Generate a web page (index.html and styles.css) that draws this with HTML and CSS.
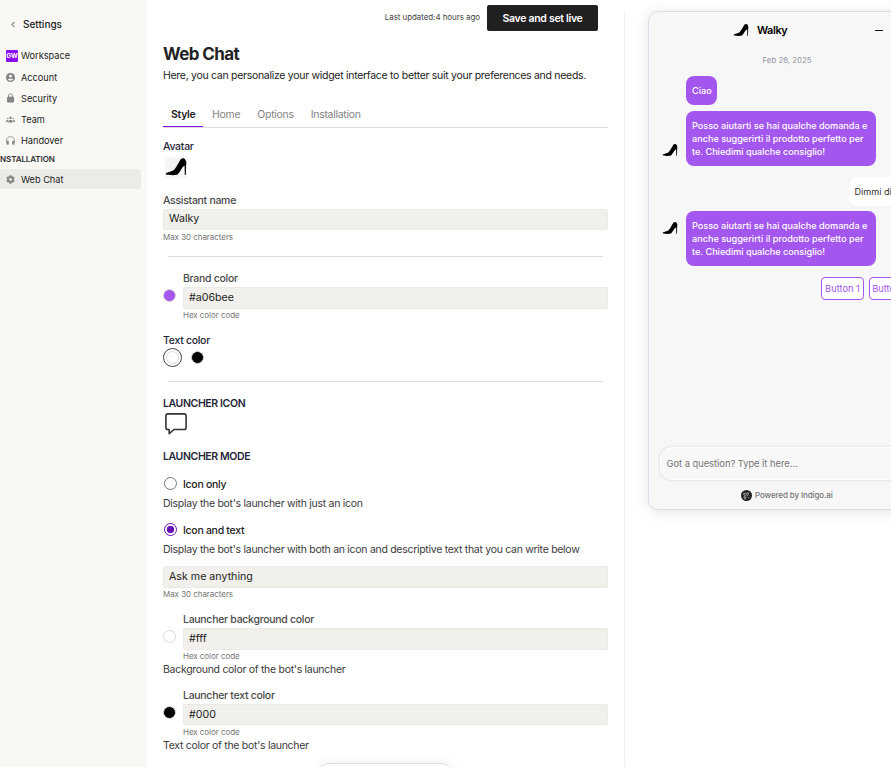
FILE: index.html
```html
<!DOCTYPE html>
<html lang="en">
<head>
<meta charset="utf-8">
<title>Web Chat settings</title>
<link rel="stylesheet" href="styles.css">
</head>
<body>
<svg class="defs" width="0" height="0">
  <symbol id="shoe" viewBox="0 0 22 21">
    <path d="M0.8 16.2C3.2 14.8 6.6 14.6 8.6 13.2C11.6 10.8 13.4 5 16 2C17 .9 19.3 1 20 2.2C21.6 4.4 21.6 6.6 21 8.6L20.8 17.9H19.8L19.6 8.8C18.2 9.4 17.4 10.6 16.2 12.4C14.6 15 13.2 17.4 11.4 18C8 18.3 3.2 18.1 1 17.5Z"/>
  </symbol>
</svg>
<div class="app">
  <aside class="sidebar">
    <div class="back"><svg width="4" height="7" viewBox="0 0 4 7"><path d="M3.2 1L1 3.5L3.2 6" fill="none" stroke="#333" stroke-width="0.9"/></svg><span>Settings</span></div>
    <nav class="nav">
      <a class="item"><i class="badge">GW</i>Workspace</a>
      <a class="item"><svg width="9" height="9" viewBox="0 0 18 18"><circle cx="9" cy="9" r="9" fill="#858585"/><circle cx="9" cy="6.4" r="2.8" fill="#f9f8f4"/><path d="M3.6 13.2C5 10.6 13 10.6 14.4 13.2C12.5 16.2 5.5 16.2 3.6 13.2Z" fill="#f9f8f4"/></svg>Account</a>
      <a class="item"><svg width="9" height="10" viewBox="0 0 18 20"><path d="M5 9V5.5C5 0.5 13 0.5 13 5.5V9" fill="none" stroke="#858585" stroke-width="2"/><rect x="2" y="7.5" width="14" height="11.5" rx="2.5" fill="#858585"/><circle cx="9" cy="13" r="1.2" fill="#aaa"/></svg>Security</a>
      <a class="item"><svg width="9" height="7" viewBox="0 0 18 14"><g fill="#858585"><circle cx="9" cy="3.4" r="2.4"/><circle cx="3.6" cy="5" r="1.6"/><circle cx="14.4" cy="5" r="1.6"/><path d="M4.6 13V10.2C5.4 7 12.6 7 13.4 10.2V13ZM0 12V9.6C.5 8 2.5 7.6 4.2 8.2L3.2 12ZM18 12V9.6C17.5 8 15.5 7.6 13.8 8.2L14.8 12Z"/></g></svg>Team</a>
      <a class="item"><svg width="9" height="9" viewBox="0 0 18 18"><path d="M1.2 13V8.5C1.5-1.2 16.5-1.2 16.8 8.5V13" fill="none" stroke="#858585" stroke-width="1.6"/><rect x="1" y="9.5" width="4.6" height="8" rx="1.4" fill="#858585"/><rect x="12.4" y="9.5" width="4.6" height="8" rx="1.4" fill="#858585"/></svg>Handover</a>
    </nav>
    <div class="group">NSTALLATION</div>
    <a class="item active"><svg width="9" height="9" viewBox="0 0 18 18"><g fill="#858585"><path fill-rule="evenodd" d="M9 2.2A6.8 6.8 0 1 1 9 15.8A6.8 6.8 0 1 1 9 2.2ZM9 6.2A2.8 2.8 0 1 0 9 11.8A2.8 2.8 0 1 0 9 6.2Z"/></g><path d="M9 .4V4M9 14V17.6M1.5 4.7L4.6 6.5M13.4 11.5L16.5 13.3M1.5 13.3L4.6 11.5M13.4 6.5L16.5 4.7" stroke="#858585" stroke-width="4"/></svg>Web Chat</a>
  </aside>

  <main class="main">
    <header class="topbar"><span class="updated">Last updated:4 hours ago</span><button class="save">Save and set live</button></header>
    <h1>Web Chat</h1>
    <p class="lead">Here, you can personalize your widget interface to better suit your preferences and needs.</p>
    <div class="tabs"><a class="tab on">Style</a><a class="tab">Home</a><a class="tab">Options</a><a class="tab">Installation</a></div>

    <section class="block avatar">
      <div class="label dark">Avatar</div>
      <div class="thumb"><svg width="22" height="21"><use href="#shoe"/></svg></div>
    </section>

    <section class="block name">
      <div class="label">Assistant name</div>
      <div class="input short">Walky</div>
      <div class="hint gap">Max 30 characters</div>
    </section>
    <hr>
    <section class="color brand">
      <i class="swatch violet"></i>
      <div class="field">
        <div class="label">Brand color</div>
        <div class="input">#a06bee</div>
        <div class="hint">Hex color code</div>
      </div>
    </section>
    <section class="block textcolor">
      <div class="label dark">Text color</div>
      <div class="choices"><span class="ring"><i class="swatch white"></i></span><i class="swatch black"></i></div>
    </section>
    <hr>
    <section class="block launcher">
      <div class="label caps">LAUNCHER ICON</div>
      <svg class="bubble-icon" width="22" height="22" viewBox="0 0 22 22"><path d="M3 .9H19Q21.1 .9 21.1 3V14.4Q21.1 16.5 19 16.5H9L4.2 20.6V16.5H3Q.9 16.5 .9 14.4V3Q.9 .9 3 .9Z" fill="none" stroke="#333" stroke-width="1.6" stroke-linejoin="round"/></svg>
    </section>
    <section class="block mode">
      <div class="label caps">LAUNCHER MODE</div>
      <label class="radio first"><i class="dot"></i>Icon only</label>
      <p class="text">Display the bot's launcher with just an icon</p>
      <label class="radio"><i class="dot checked"></i>Icon and text</label>
      <p class="text">Display the bot's launcher with both an icon and descriptive text that you can write below</p>
      <div class="input message">Ask me anything</div>
      <div class="hint">Max 30 characters</div>
    </section>
    <section class="color bg">
      <i class="swatch white"></i>
      <div class="field">
        <div class="label">Launcher background color</div>
        <div class="input">#fff</div>
        <div class="hint">Hex color code</div>
      </div>
    </section>
    <p class="text tight">Background color of the bot's launcher</p>
    <section class="color fg">
      <i class="swatch black"></i>
      <div class="field">
        <div class="label">Launcher text color</div>
        <div class="input short last">#000</div>
        <div class="hint gap">Hex color code</div>
      </div>
    </section>
    <p class="text tight">Text color of the bot's launcher</p>
  </main>

  <aside class="preview">
    <div class="chat">
      <div class="chat-head"><svg width="16" height="15" viewBox="0 0 22 21"><use href="#shoe"/></svg><b>Walky</b><i class="minimize"></i></div>
      <div class="date">Feb 26, 2025</div>
      <div class="row"><div class="msg">Ciao</div></div>
      <div class="row second"><svg class="face" width="16" height="15" viewBox="0 0 22 21"><use href="#shoe"/></svg><div class="msg">Posso aiutarti se hai qualche domanda e<br>anche suggerirti il prodotto perfetto per<br>te. Chiedimi qualche consiglio!</div></div>
      <div class="mine"><span>Dimmi di più</span></div>
      <div class="row third"><svg class="face" width="16" height="15" viewBox="0 0 22 21"><use href="#shoe"/></svg><div class="msg">Posso aiutarti se hai qualche domanda e<br>anche suggerirti il prodotto perfetto per<br>te. Chiedimi qualche consiglio!</div></div>
      <div class="replies"><button>Button 1</button><button>Button 2</button></div>
      <div class="ask">Got a question? Type it here...</div>
      <div class="powered"><svg width="11" height="11" viewBox="0 0 22 22"><circle cx="11" cy="11" r="11" fill="#222"/><path d="M6 5.5V10M10 6.5A2.6 2.6 0 1 0 10 11M14.5 4V10.5A2.5 2.5 0 1 1 14.5 6.5M6.5 13.5A2.4 2.4 0 1 1 6.5 18V12.5M13 13.5L16.5 17" fill="none" stroke="#ccc" stroke-width="1.3"/></svg><span>Powered by Indigo.ai</span></div>
    </div>
  </aside>
</div>
<div class="toast"></div>
</body>
</html>
```
FILE: styles.css
```css
* { box-sizing: border-box; }
body, h1, p { margin: 0; }
html, body { height: 767px; overflow: hidden; }
body { position: relative; background: #fff; color: #222; font-family: Inter, "Liberation Sans", sans-serif; font-size: 10.5px; letter-spacing: -0.29px; }
svg { display: block; flex: none; }
.defs { position: absolute; }
.app { display: flex; height: 767px; }

.sidebar { flex: none; width: 147px; background: #f9f8f4; padding-top: 17px; letter-spacing: 0; }
.back { display: flex; align-items: center; gap: 8px; height: 14px; padding-left: 11px; font-size: 10px; font-weight: 500; }
.nav { margin-top: 14.4px; }
.item { display: flex; align-items: center; height: 21.1px; padding-left: 6px; font-size: 9.2px; }
.item svg { margin-right: 6px; }
.badge { width: 12px; height: 12px; margin-right: 3px; border-radius: 1px; background: #8a0cf0; color: #fff; font: 700 6.5px/12px Inter; text-align: center; }
.group { height: 10px; margin-top: 3px; font-size: 8.05px; line-height: 10px; font-weight: 600; color: #333; letter-spacing: -.1px; }
.active { width: 141px; height: 20px; margin-top: 5.1px; padding-top: 1px; border-radius: 0 3px 3px 0; background: #ecebe7; }

.main { flex: none; width: 478px; padding: 5px 16px 0; position: relative; }
.main::after { content: ""; position: absolute; right: 0; top: 11px; bottom: 0; width: 1px; background: #eee; }
.topbar { display: flex; justify-content: flex-end; align-items: center; height: 26px; padding-right: 11px; gap: 7px; }
.updated { margin-top: -2px; font-size: 8px; letter-spacing: -.07px; color: #444; }
.save { width: 111px; height: 26px; padding: 0; border: 0; border-radius: 2px; background: #202020; color: #fff; font: 600 10.5px Inter; letter-spacing: -.3px; }
h1 { margin-top: 13px; height: 20px; font-size: 17px; line-height: 21px; font-weight: 700; letter-spacing: -.6px; }
.lead { height: 14px; margin-top: 4px; line-height: 16px; white-space: nowrap; }
.tabs { display: flex; gap: 1px; width: 445px; height: 27px; margin-top: 19px; border-bottom: 1px solid #dcdcdc; }
.tab { padding: 0 8px; line-height: 28px; height: 26px; color: #848484; }
.on { width: 40px; color: #222; font-weight: 600; border-bottom: 1px solid #8a0cf0; }
.block, .color { width: 445px; }
.label { height: 14px; line-height: 16px; font-weight: 500; color: #4a4a4a; }
.dark { color: #26263a; }
.caps { color: #26263a; font-weight: 600; letter-spacing: -.38px; }
.avatar { margin-top: 11px; }
.thumb { width: 22px; height: 21px; margin: 4px 0 0 2px; background: #f6f6f6; }
.name { margin-top: 15px; }
.input { height: 22px; margin-top: 2px; padding-left: 5px; border: 1px solid #ebeae5; border-radius: 2px; background: #f1f0ec; font-size: 10.67px; line-height: 19px; letter-spacing: 0; }
.short { height: 21px; line-height: 18px; }
.last { line-height: 20px; }
.hint { margin-top: 1px; font-size: 8px; line-height: 10px; letter-spacing: -.05px; color: #757575; }
.gap { margin-top: 2px; }
hr { width: 435px; height: 1px; margin: 14px 5px; border: 0; background: #dcdcdc; }
.color { display: flex; gap: 7px; }
.field { flex: 1; }
.swatch { flex: none; width: 13px; height: 13px; border: 1px solid #d9d9d9; border-radius: 50%; }
.color .swatch { margin-top: 18px; }
.violet { background: #a457ee; }
.black { background: #000; }
.white { background: #fff; }
.textcolor { margin-top: 13px; }
.choices { display: flex; align-items: center; gap: 9px; height: 19px; margin-top: 1px; }
.ring { display: grid; place-items: center; width: 19px; height: 19px; border: 1px solid #444; border-radius: 50%; }
.bubble-icon { margin: 3px 0 0 2px; }
.mode { margin-top: 14px; }
.radio { display: flex; align-items: center; gap: 6px; height: 14px; margin-top: 13px; font-weight: 500; }
.first { margin-top: 14px; }
.dot { width: 13px; height: 13px; margin: -1px 0 0 1px; border: 1px solid #777; border-radius: 50%; background: #fff; }
.checked { border: 1px solid #6710b5; background: radial-gradient(circle, #6710b5 3.4px, #fff 4px); }
.text { height: 14px; margin-top: 5px; line-height: 16px; color: #3a3a3a; white-space: nowrap; }
.message { margin-top: 10px; }
.bg { margin-top: 13px; }
.fg { margin-top: 12px; }
.tight { margin-top: 1px; }

.preview { flex: none; width: 266px; padding: 11px 0 0 23px; overflow: hidden; }
.chat { width: 278px; height: 499px; border: 1px solid #dcdce8; border-radius: 10px; background: #f7f7f7; box-shadow: 0 2px 14px rgba(0,0,0,.11); letter-spacing: 0; font-size: 9.12px; }
.chat-head { display: flex; align-items: center; height: 37px; padding-left: 84px; color: #000; }
.chat-head b { margin: -1px 0 0 8px; width: 118px; font-size: 10.9px; font-weight: 600; letter-spacing: -.4px; }
.minimize { width: 8px; height: 1.5px; background: #111; }
.date { height: 10px; margin-top: 6px; text-align: center; font-size: 7.84px; line-height: 10px; color: #9696a6; }
.row { display: flex; align-items: flex-start; margin: 11px 0 0 37px; position: relative; }
.second { margin-top: 6px; }
.third { margin-top: 5px; }
.face { margin: 32px 8px 0 -24px; }
.third .face { margin-top: 10px; }
.msg { padding: 8px 8px 8px 6px; border-radius: 8px; background: #a457ee; color: #fff; line-height: 13px; font-weight: 500; white-space: nowrap; }
.row:not(.second):not(.third) .msg { width: 31px; }
.second .msg, .third .msg { width: 190px; }
.mine { display: flex; margin: 11px 0 0 200px; }
.mine span { padding: 8px 5.5px; border-radius: 8px; background: #fff; line-height: 13px; white-space: nowrap; color: #333; }
.replies { display: flex; gap: 5px; margin: 11px 0 0 172px; }
.replies button { flex: none; width: 43px; height: 23px; padding: 0; border: 1px solid #a457ee; border-radius: 4px; background: #fff; color: #a457ee; font: 9.3px Inter; }
.ask { height: 33px; margin: 147px 11px 0; padding-left: 5.5px; border: 1.5px solid #fff; border-radius: 12px; background: #f8f8f8; box-shadow: 0 0 3px rgba(0,0,0,.16); color: #757575; font-size: 9.3px; line-height: 31px; }
.powered { display: flex; align-items: center; gap: 3px; height: 12px; margin: 9px 0 0 92px; font-size: 8px; letter-spacing: -.12px; font-weight: 500; color: #757575; }
.toast { position: absolute; left: 317px; top: 763px; width: 136px; height: 30px; border: 1px solid #ddd; border-radius: 12px; background: #fff; box-shadow: 0 0 12px rgba(0,0,0,.07); }
```
